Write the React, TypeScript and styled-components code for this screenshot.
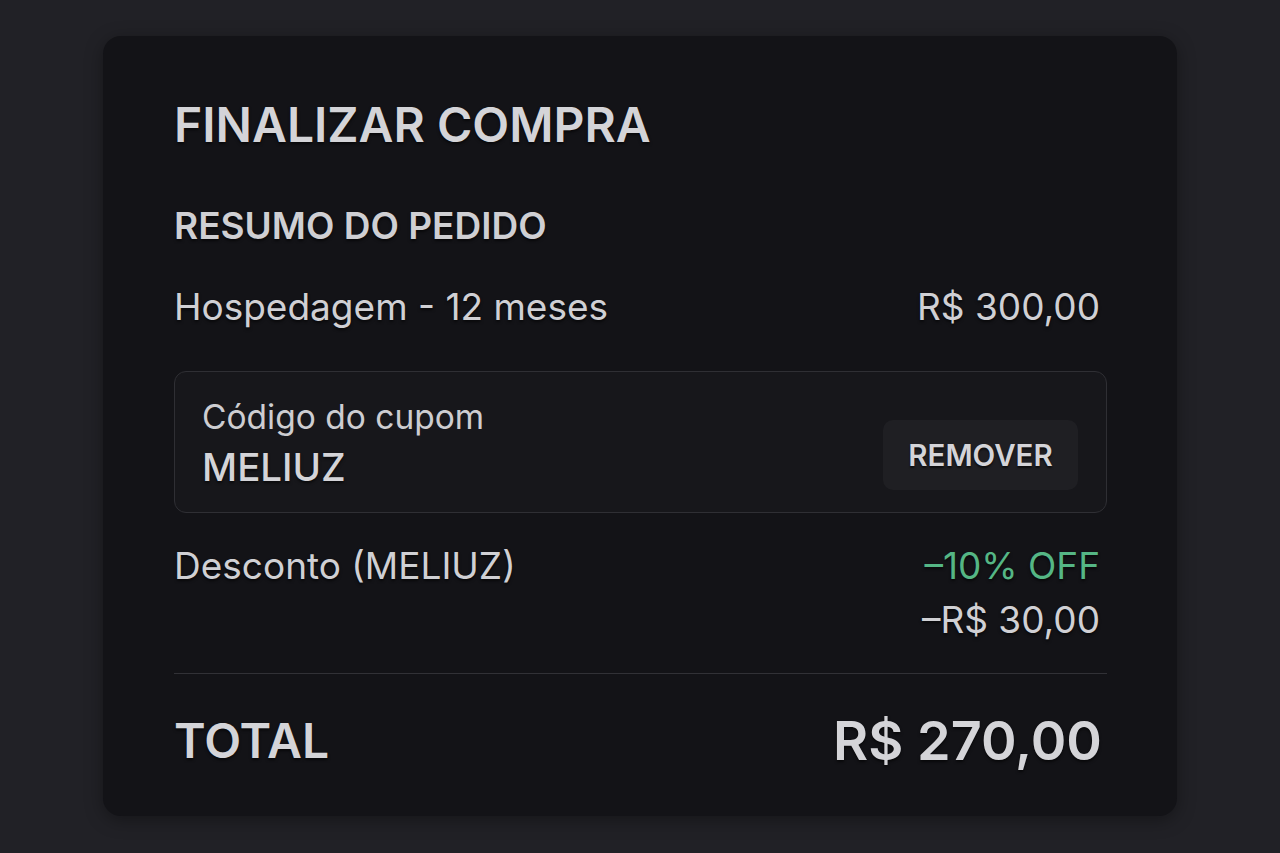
import { FC } from "react";
import styled, { createGlobalStyle } from "styled-components";

const GlobalStyle = createGlobalStyle`
  html, body {
    margin: 0;
    padding: 0;
    background: #212126;
  }
  body {
    font-family: Inter, "Noto Sans", "Liberation Sans", sans-serif;
    color: #d4d4d8;
    -webkit-font-smoothing: antialiased;
  }
`;

const Page = styled.main`
  display: flex;
  justify-content: center;
  width: 100%;
  min-height: 853px;
  padding-top: 36px;
  box-sizing: border-box;
`;

const Card = styled.section`
  display: flex;
  flex-direction: column;
  width: 1074px;
  height: 780px;
  box-sizing: border-box;
  padding: 49px 70px 0 71px;
  background: #131317;
  border-radius: 18px;
  box-shadow: 0 4px 18px rgba(0, 0, 0, 0.35);
`;

const Title = styled.h1`
  margin: 0;
  font-size: 48px;
  line-height: 80px;
  font-weight: 600;
  color: #d4d4d8;
  text-shadow: 0 2px 3px rgba(0, 0, 0, 0.6);
`;

const Subtitle = styled.h2`
  margin: 39px 0 0;
  font-size: 37px;
  line-height: 44px;
  font-weight: 600;
  color: #cfcfd3;
  text-shadow: 0 2px 3px rgba(0, 0, 0, 0.6);
`;

const Row = styled.div<{ $top?: number; $align?: string }>`
  display: flex;
  justify-content: space-between;
  align-items: ${(p) => p.$align ?? "center"};
  margin-top: ${(p) => p.$top ?? 0}px;
`;

const Label = styled.span`
  font-size: 37px;
  line-height: 54px;
  font-weight: 400;
  color: #d0d0d4;
  text-shadow: 0 2px 3px rgba(0, 0, 0, 0.6);
`;

const Amount = styled.span<{ $green?: boolean }>`
  font-size: 37px;
  line-height: 54px;
  font-weight: 400;
  padding-right: 7px;
  color: ${(p) => (p.$green ? "#55b685" : "#d0d0d4")};
  text-shadow: 0 2px 3px rgba(0, 0, 0, 0.6);
`;

const AmountStack = styled.div`
  display: flex;
  flex-direction: column;
  align-items: flex-end;
`;

const Coupon = styled.div`
  display: flex;
  justify-content: space-between;
  align-items: center;
  margin-top: 37px;
  height: 142px;
  box-sizing: border-box;
  padding: 0 28px 0 27px;
  background: #17171b;
  border: 1px solid #2f2f34;
  border-radius: 12px;
`;

const CouponInfo = styled.div`
  display: flex;
  flex-direction: column;
  margin-top: 6px;
`;

const CouponLabel = styled.span`
  font-size: 33.5px;
  line-height: 44px;
  color: #cdcdd1;
`;

const CouponCode = styled.span`
  font-size: 38.5px;
  line-height: 56px;
  font-weight: 500;
  color: #d4d4d8;
  text-shadow: 0 2px 3px rgba(0, 0, 0, 0.6);
`;

const RemoveButton = styled.button`
  width: 195px;
  height: 70px;
  border: none;
  border-radius: 10px;
  background: #1f1f23;
  color: #d4d4d8;
  font-family: inherit;
  font-size: 29.5px;
  font-weight: 600;
  cursor: pointer;
  margin-top: 26px;
  text-shadow: 0 2px 2px rgba(0, 0, 0, 0.6);
`;

const Divider = styled.hr`
  margin: 26px 0 0;
  border: none;
  border-top: 1px solid #313136;
`;

const TotalLabel = styled.span`
  font-size: 48px;
  line-height: 80px;
  font-weight: 600;
  color: #d4d4d8;
  text-shadow: 0 2px 3px rgba(0, 0, 0, 0.6);
`;

const TotalValue = styled.span`
  font-size: 54px;
  line-height: 80px;
  font-weight: 600;
  padding-right: 5px;
  color: #d4d4d8;
  text-shadow: 0 2px 3px rgba(0, 0, 0, 0.6);
`;

const App: FC = () => {
  return (
    <>
      <GlobalStyle />
      <Page>
        <Card>
          <Title>FINALIZAR COMPRA</Title>
          <Subtitle>RESUMO DO PEDIDO</Subtitle>
          <Row $top={32}>
            <Label>Hospedagem - 12 meses</Label>
            <Amount>R$ 300,00</Amount>
          </Row>
          <Coupon>
            <CouponInfo>
              <CouponLabel>Código do cupom</CouponLabel>
              <CouponCode>MELIUZ</CouponCode>
            </CouponInfo>
            <RemoveButton>REMOVER</RemoveButton>
          </Coupon>
          <Row $top={26} $align="flex-start">
            <Label>Desconto (MELIUZ)</Label>
            <AmountStack>
              <Amount $green>–10% OFF</Amount>
              <Amount>–R$ 30,00</Amount>
            </AmountStack>
          </Row>
          <Divider />
          <Row $top={27}>
            <TotalLabel>TOTAL</TotalLabel>
            <TotalValue>R$ 270,00</TotalValue>
          </Row>
        </Card>
      </Page>
    </>
  );
};

export default App;
